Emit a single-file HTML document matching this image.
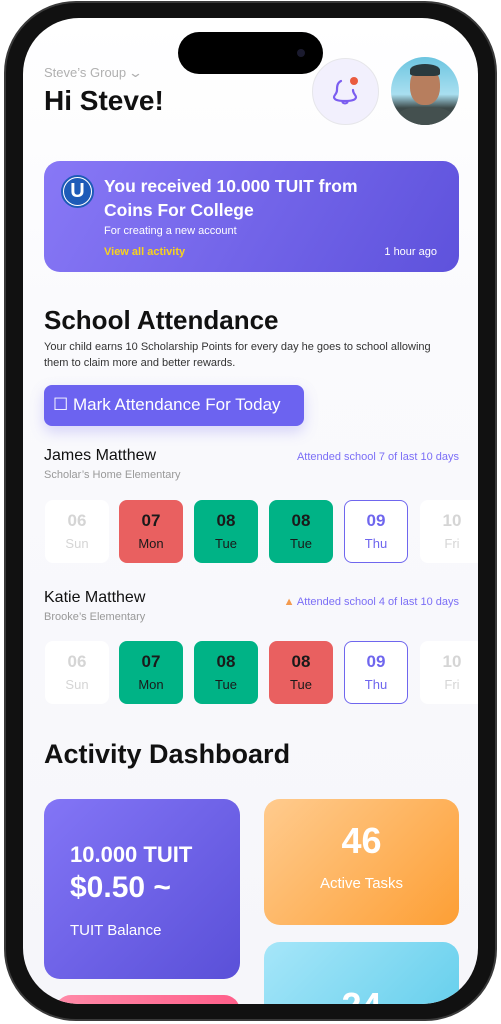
<!DOCTYPE html>
<html><head><meta charset="utf-8"><style>
*{margin:0;padding:0;box-sizing:border-box}
body{width:501px;height:1024px;background:#fff;position:relative;overflow:hidden;font-family:"Liberation Sans",sans-serif}
.phone{position:absolute;left:4px;top:1px;width:493px;height:1020px;background:#111;border-radius:72px;border:2px solid #3a3a3a}
.a{position:absolute;white-space:nowrap}
.island{position:absolute;left:178px;top:32px;width:145px;height:42px;border-radius:21px;background:#000}
.day{position:absolute;width:64px;height:63px;border-radius:8px;text-align:center}
.day b{display:block;font-size:17px;margin-top:11px;font-weight:bold}
.day span{display:block;font-size:13px;margin-top:5px}
.w{background:#fff;color:#d5d5d5}
.r{background:#e96060;color:#1a1a1a}
.g{background:#00b386;color:#1a1a1a}
.p{background:#fff;border:1.5px solid #6f66ee;color:#6f66ee}
.p b{margin-top:10px}
</style></head><body>
<div class="phone"></div>
<div style="position:absolute;left:23px;top:18px;width:455px;height:986px;border-radius:56px;overflow:hidden;background:linear-gradient(#fff 0,#fafafd 300px,#f6f6fa 100%)">
<div style="position:absolute;left:-23px;top:-18px;width:501px;height:1024px">
<div class="a" style="left:44px;top:65px;font-size:13px;color:#b0b0b0">Steve’s Group <span style="font-size:13px;display:inline-block;transform:scaleX(1.4)">&#8964;</span></div>
<div class="a" style="left:44px;top:85px;font-size:28px;font-weight:bold;color:#111">Hi Steve!</div>
<div style="position:absolute;left:312px;top:58px;width:67px;height:67px;border-radius:50%;background:#f2f0fd;border:1px solid #e6e6ea"></div>
<svg style="position:absolute;left:332px;top:76px" width="28" height="30" viewBox="0 0 28 30"><path d="M9 5 C5 7 5 11 5 14 C5 18 2 19 2 21 C2 24 7 25 13 25 C19 25 24 24 24 21 C24 19 21 18 21 14" fill="none" stroke="#7b5df0" stroke-width="2.2" stroke-linecap="round"/><path d="M10 26 Q13 29 16 26" fill="none" stroke="#7b5df0" stroke-width="2"/><circle cx="22" cy="5" r="4" fill="#ea5b3f"/></svg>
<div style="position:absolute;left:391px;top:57px;width:68px;height:68px;border-radius:50%;overflow:hidden;background:linear-gradient(#6cc5e0,#a9dff0 55%,#3d4a4a 75%)">
<div style="position:absolute;left:19px;top:10px;width:30px;height:38px;border-radius:45%;background:#b77e5e"></div>
<div style="position:absolute;left:19px;top:7px;width:30px;height:12px;border-radius:50% 50% 20% 20%;background:#2a3a3e"></div>
<div style="position:absolute;left:6px;top:50px;width:56px;height:25px;border-radius:40% 40% 0 0;background:#44504f"></div>
</div>
<div style="position:absolute;left:44px;top:161px;width:415px;height:111px;border-radius:16px;background:linear-gradient(120deg,#8878f6,#5e52dc)"></div>
<div style="position:absolute;left:61px;top:175px;width:33px;height:33px;border-radius:50%;background:#fff;border:2px solid #1e5bb8"></div>
<div style="position:absolute;left:64px;top:178px;width:27px;height:27px;border-radius:50%;background:#1e5bb8;color:#fff;font-weight:bold;font-size:20px;text-align:center;line-height:27px">U</div>
<div class="a" style="left:104px;top:174px;font-size:17.5px;font-weight:bold;color:#fff;line-height:24px">You received 10.000 TUIT from<br>Coins For College</div>
<div class="a" style="left:104px;top:225px;font-size:11px;color:#fff">For creating a new account</div>
<div class="a" style="left:104px;top:246px;font-size:11px;font-weight:bold;color:#f7d21e">View all activity</div>
<div class="a" style="right:64px;top:246px;font-size:11px;color:#fff">1 hour ago</div>
<div class="a" style="left:44px;top:305px;font-size:26px;font-weight:bold;color:#111">School Attendance</div>
<div class="a" style="left:44px;top:339px;font-size:11px;color:#333;line-height:16px">Your child earns 10 Scholarship Points for every day he goes to school allowing<br>them to claim more and better rewards.</div>
<div style="position:absolute;left:44px;top:385px;width:260px;height:41px;border-radius:8px;background:#6c63f0;box-shadow:0 6px 14px rgba(108,99,240,.25)"></div>
<div class="a" style="left:53px;top:395px;font-size:17px;color:#fff">&#9744; Mark Attendance For Today</div>
<div class="a" style="left:44px;top:447px;font-size:16px;color:#111">James Matthew</div>
<div class="a" style="left:44px;top:469px;font-size:11px;color:#999">Scholar’s Home Elementary</div>
<div class="a" style="right:42px;top:451px;font-size:11px;color:#7b6ef6">Attended school 7 of last 10 days</div>
<div class="day w" style="left:45px;top:500px"><b>06</b><span>Sun</span></div>
<div class="day r" style="left:119px;top:500px"><b>07</b><span>Mon</span></div>
<div class="day g" style="left:194px;top:500px"><b>08</b><span>Tue</span></div>
<div class="day g" style="left:269px;top:500px"><b>08</b><span>Tue</span></div>
<div class="day p" style="left:344px;top:500px"><b>09</b><span>Thu</span></div>
<div class="day w" style="left:420px;top:500px"><b>10</b><span>Fri</span></div>
<div class="a" style="left:44px;top:589px;font-size:16px;color:#111">Katie Matthew</div>
<div class="a" style="left:44px;top:611px;font-size:11px;color:#999">Brooke’s Elementary</div>
<div class="a" style="right:42px;top:596px;font-size:11px;color:#7b6ef6"><span style="color:#f39a4e">&#9650;</span> Attended school 4 of last 10 days</div>
<div class="day w" style="left:45px;top:641px"><b>06</b><span>Sun</span></div>
<div class="day g" style="left:119px;top:641px"><b>07</b><span>Mon</span></div>
<div class="day g" style="left:194px;top:641px"><b>08</b><span>Tue</span></div>
<div class="day r" style="left:269px;top:641px"><b>08</b><span>Tue</span></div>
<div class="day p" style="left:344px;top:641px"><b>09</b><span>Thu</span></div>
<div class="day w" style="left:420px;top:641px"><b>10</b><span>Fri</span></div>
<div class="a" style="left:44px;top:739px;font-size:27px;font-weight:bold;color:#111">Activity Dashboard</div>
<div style="position:absolute;left:44px;top:799px;width:196px;height:180px;border-radius:16px;background:linear-gradient(135deg,#8375f6,#5a50d8)"></div>
<div class="a" style="left:70px;top:842px;font-size:22px;font-weight:bold;color:#fff">10.000 TUIT</div>
<div class="a" style="left:70px;top:871px;font-size:30px;font-weight:bold;color:#fff">$0.50 ~</div>
<div class="a" style="left:70px;top:922px;font-size:15px;color:#fff">TUIT Balance</div>
<div style="position:absolute;left:264px;top:799px;width:195px;height:126px;border-radius:16px;background:linear-gradient(135deg,#ffcb8e,#fd9f35)"></div>
<div class="a" style="left:264px;width:195px;text-align:center;top:820px;font-size:36px;font-weight:bold;color:#fff">46</div>
<div class="a" style="left:264px;width:195px;text-align:center;top:875px;font-size:15px;color:#fff">Active Tasks</div>
<div style="position:absolute;left:264px;top:942px;width:195px;height:120px;border-radius:16px;background:linear-gradient(135deg,#a6e6f9,#5acbea)"></div>
<div class="a" style="left:264px;width:195px;text-align:center;top:985px;font-size:36px;font-weight:bold;color:#fff">24</div>
<div style="position:absolute;left:55px;top:995px;width:185px;height:60px;border-radius:16px;background:linear-gradient(90deg,#ff8aa8,#ff5f8a)"></div>
</div>
</div>
<div class="island"></div>
<div style="position:absolute;left:297px;top:49px;width:8px;height:8px;border-radius:50%;background:#1a1a2e"></div>
</body></html>
